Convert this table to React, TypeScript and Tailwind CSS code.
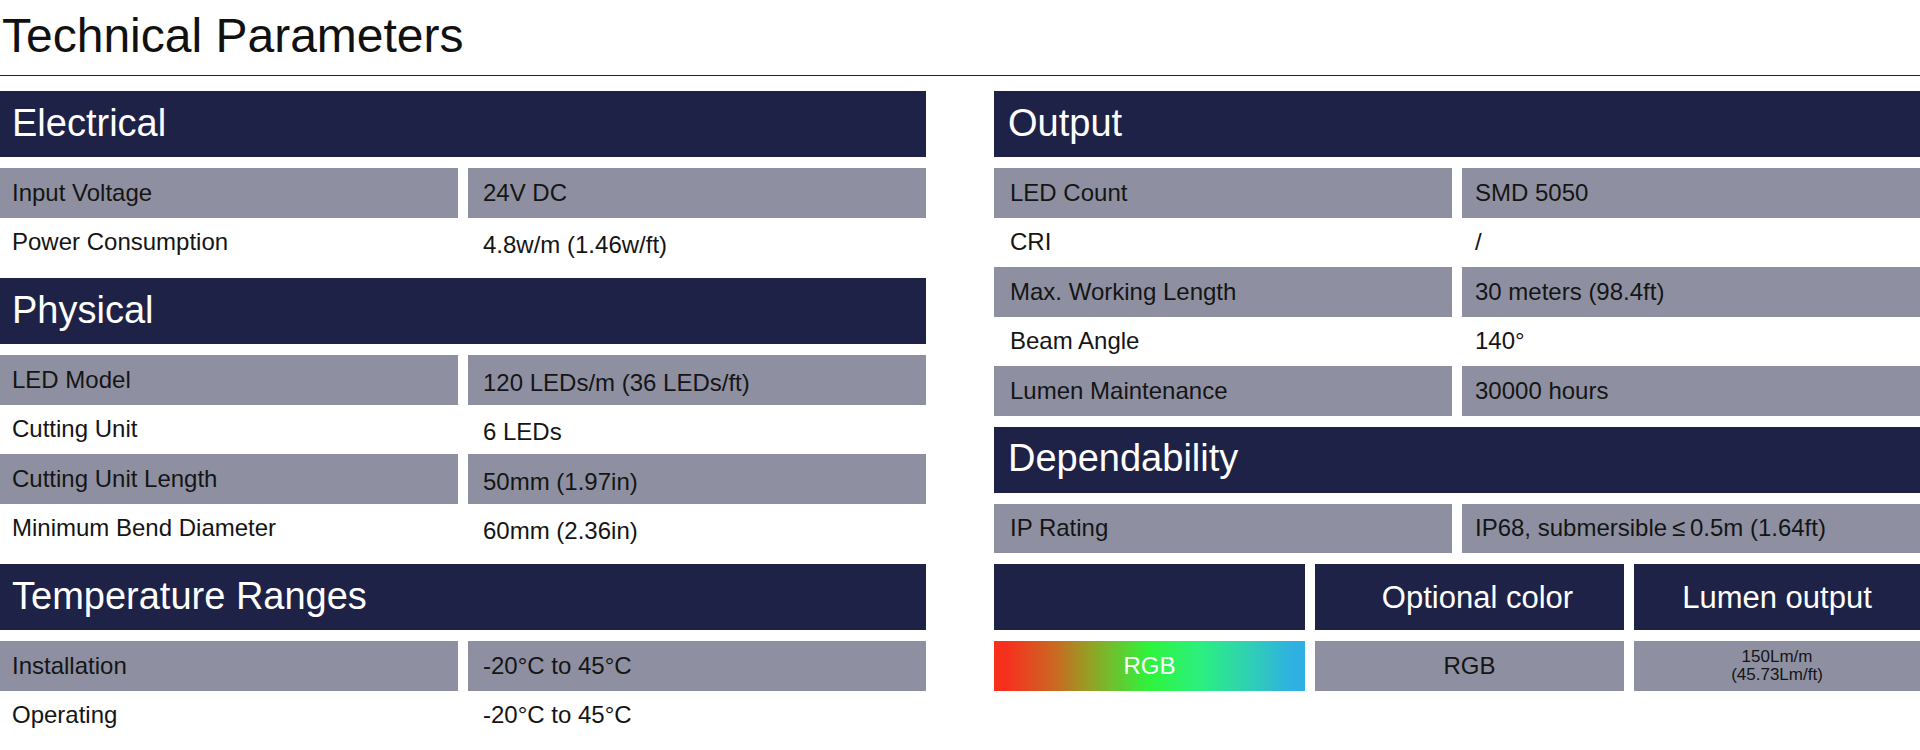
import React from 'react';

type Row = { label: string; value: string; shift?: boolean };

const electrical: Row[] = [
    { label: 'Input Voltage', value: '24V DC' },
    { label: 'Power Consumption', value: '4.8w/m (1.46w/ft)', shift: true },
];

const physical: Row[] = [
    { label: 'LED Model', value: '120 LEDs/m (36 LEDs/ft)', shift: true },
    { label: 'Cutting Unit', value: '6 LEDs', shift: true },
    { label: 'Cutting Unit Length', value: '50mm (1.97in)', shift: true },
    { label: 'Minimum Bend Diameter', value: '60mm (2.36in)', shift: true },
];

const temperature: Row[] = [
    { label: 'Installation', value: '-20°C to 45°C' },
    { label: 'Operating', value: '-20°C to 45°C' },
];

const output: Row[] = [
    { label: 'LED Count', value: 'SMD 5050' },
    { label: 'CRI', value: '/' },
    { label: 'Max. Working Length', value: '30 meters (98.4ft)' },
    { label: 'Beam Angle', value: '140°' },
    { label: 'Lumen Maintenance', value: '30000 hours' },
];

const dependability: Row[] = [
    { label: 'IP Rating', value: 'IP68, submersible\u2009\u2264\u20090.5m (1.64ft)' },
];

function Section({ title, rows, right }: { title: string; rows: Row[]; right?: boolean }) {
    return (
        <div className="flex flex-col gap-[11px]">
            <div className={`h-[66px] bg-[#1f2247] flex items-center pb-[3px] text-white text-[38px] leading-none ${right ? 'pl-[14px]' : 'pl-3'}`}>
                {title}
            </div>
            <div className="flex flex-col">
                {rows.map((row, i) => (
                    <div key={row.label} className="grid grid-cols-2 gap-[10px] h-[49.5px] text-[24px] leading-none text-[#151515]">
                        <div className={`flex items-center ${i % 2 === 0 ? 'bg-[#8e90a1]' : ''} ${right ? 'pl-4' : 'pl-3'}`}>
                            {row.label}
                        </div>
                        <div className={`flex items-center ${i % 2 === 0 ? 'bg-[#8e90a1]' : ''} ${right ? 'pl-[13px]' : 'pl-[15px]'} ${row.shift ? 'pt-[6px]' : ''}`}>
                            {row.value}
                        </div>
                    </div>
                ))}
            </div>
        </div>
    );
}

export default function App() {
    return (
        <div className="w-[1920px] h-[750px] bg-white overflow-hidden font-['Liberation_Sans',Arial,sans-serif]">
            <div className="h-[76px] border-b border-[#222] pt-[8px] pl-[2px]">
                <h1 className="text-[48px] leading-[56px] text-[#111]">Technical Parameters</h1>
            </div>

            <div className="flex justify-between mt-[15px]">
                {/* left column */}
                <div className="w-[926px] flex flex-col gap-[11px]">
                    <Section title="Electrical" rows={electrical} />
                    <Section title="Physical" rows={physical} />
                    <Section title="Temperature Ranges" rows={temperature} />
                </div>

                {/* right column */}
                <div className="w-[926px] flex flex-col gap-[11px]">
                    <Section title="Output" rows={output} right />
                    <Section title="Dependability" rows={dependability} right />

                    <div className="flex flex-col gap-[11px]">
                        <div className="flex gap-[10px] h-[66px] text-white text-[31px] leading-none">
                            <div className="w-[311px] bg-[#1f2247]" />
                            <div className="w-[309px] bg-[#1f2247] flex items-center justify-center pl-4">Optional color</div>
                            <div className="flex-1 bg-[#1f2247] flex items-center justify-center">Lumen output</div>
                        </div>
                        <div className="flex gap-[10px] h-[50px]">
                            <div className="w-[311px] flex items-center justify-center text-white text-[24px] bg-[linear-gradient(to_right,#f7301e_4%,#c96a22_20%,#8fa625_32%,#2ef43c_50%,#2bf07e_66%,#2fd0b4_82%,#2fb0e2_96%)]">
                                RGB
                            </div>
                            <div className="w-[309px] bg-[#8e90a1] flex items-center justify-center text-[24px] text-[#151515]">
                                RGB
                            </div>
                            <div className="flex-1 bg-[#8e90a1] flex flex-col items-center justify-center text-[17px] leading-[18px] text-[#151515]">
                                <span>150Lm/m</span>
                                <span>(45.73Lm/ft)</span>
                            </div>
                        </div>
                    </div>
                </div>
            </div>
        </div>
    );
}
